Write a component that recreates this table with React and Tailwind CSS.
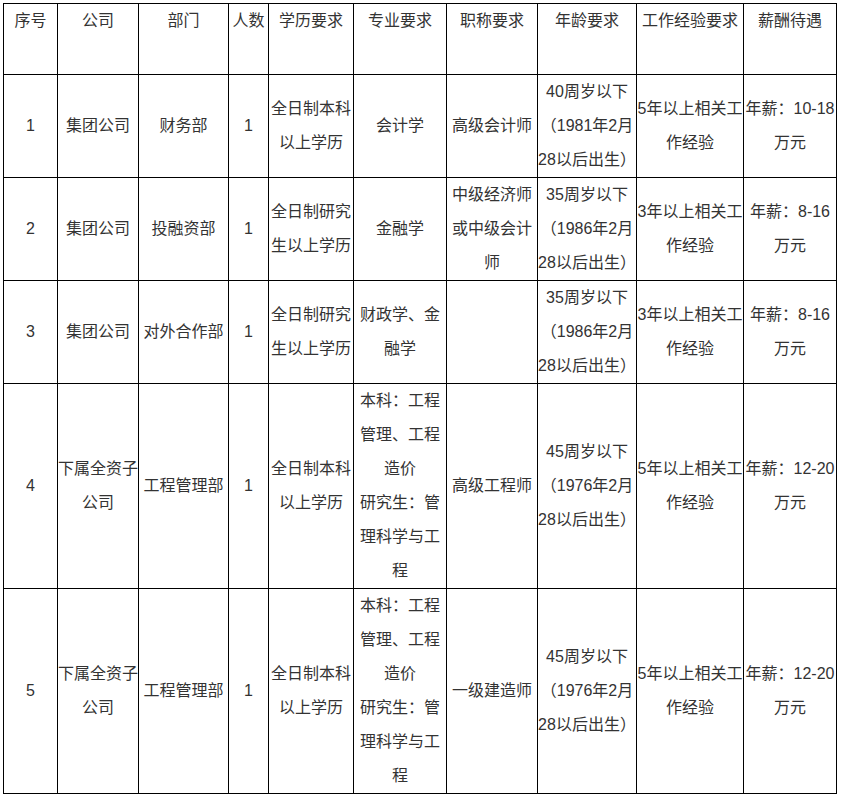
import React from "react";

const cols = [54, 81, 90, 40, 85, 93, 91, 99, 107, 93];

const header = ["序号", "公司", "部门", "人数", "学历要求", "专业要求", "职称要求", "年龄要求", "工作经验要求", "薪酬待遇"];

const rows = [
  {
    h: 103,
    cells: [
      ["1"],
      ["集团公司"],
      ["财务部"],
      ["1"],
      ["全日制本科", "以上学历"],
      ["会计学"],
      ["高级会计师"],
      ["40周岁以下", "（1981年2月", "28以后出生）"],
      ["5年以上相关工", "作经验"],
      ["年薪：10-18", "万元"],
    ],
  },
  {
    h: 103,
    cells: [
      ["2"],
      ["集团公司"],
      ["投融资部"],
      ["1"],
      ["全日制研究", "生以上学历"],
      ["金融学"],
      ["中级经济师", "或中级会计", "师"],
      ["35周岁以下", "（1986年2月", "28以后出生）"],
      ["3年以上相关工", "作经验"],
      ["年薪：8-16", "万元"],
    ],
  },
  {
    h: 103,
    cells: [
      ["3"],
      ["集团公司"],
      ["对外合作部"],
      ["1"],
      ["全日制研究", "生以上学历"],
      ["财政学、金", "融学"],
      [""],
      ["35周岁以下", "（1986年2月", "28以后出生）"],
      ["3年以上相关工", "作经验"],
      ["年薪：8-16", "万元"],
    ],
  },
  {
    h: 205,
    cells: [
      ["4"],
      ["下属全资子", "公司"],
      ["工程管理部"],
      ["1"],
      ["全日制本科", "以上学历"],
      ["本科：工程", "管理、工程", "造价", "研究生：管", "理科学与工", "程"],
      ["高级工程师"],
      ["45周岁以下", "（1976年2月", "28以后出生）"],
      ["5年以上相关工", "作经验"],
      ["年薪：12-20", "万元"],
    ],
  },
  {
    h: 205,
    cells: [
      ["5"],
      ["下属全资子", "公司"],
      ["工程管理部"],
      ["1"],
      ["全日制本科", "以上学历"],
      ["本科：工程", "管理、工程", "造价", "研究生：管", "理科学与工", "程"],
      ["一级建造师"],
      ["45周岁以下", "（1976年2月", "28以后出生）"],
      ["5年以上相关工", "作经验"],
      ["年薪：12-20", "万元"],
    ],
  },
];

function Lines({ lines }) {
  return (
    <div className="flex flex-col items-center">
      {lines.map((l, i) => (
        <div key={i} className="whitespace-nowrap h-[34px] leading-[34px]">
          {l === "" ? "\u00a0" : l}
        </div>
      ))}
    </div>
  );
}

export default function App() {
  return (
    <div
      className="w-[842px] h-[794px] bg-white pt-[3px] pl-[3px] text-[#333333] text-[16px]"
      style={{ fontFamily: '"Liberation Sans", "Noto Sans CJK SC", sans-serif' }}
    >
      <table className="table-fixed border-collapse w-[834px]">
        <colgroup>
          {cols.map((w, i) => (
            <col key={i} style={{ width: w }} />
          ))}
        </colgroup>
        <thead>
          <tr className="h-[71px]">
            {header.map((h, i) => (
              <th key={i} className="border border-black p-0 align-top font-normal text-center overflow-visible">
                <Lines lines={[h]} />
              </th>
            ))}
          </tr>
        </thead>
        <tbody>
          {rows.map((r, ri) => (
            <tr key={ri} style={{ height: r.h }}>
              {r.cells.map((c, ci) => (
                <td key={ci} className="border border-black p-0 align-middle text-center overflow-visible">
                  <Lines lines={c} />
                </td>
              ))}
            </tr>
          ))}
        </tbody>
      </table>
    </div>
  );
}
